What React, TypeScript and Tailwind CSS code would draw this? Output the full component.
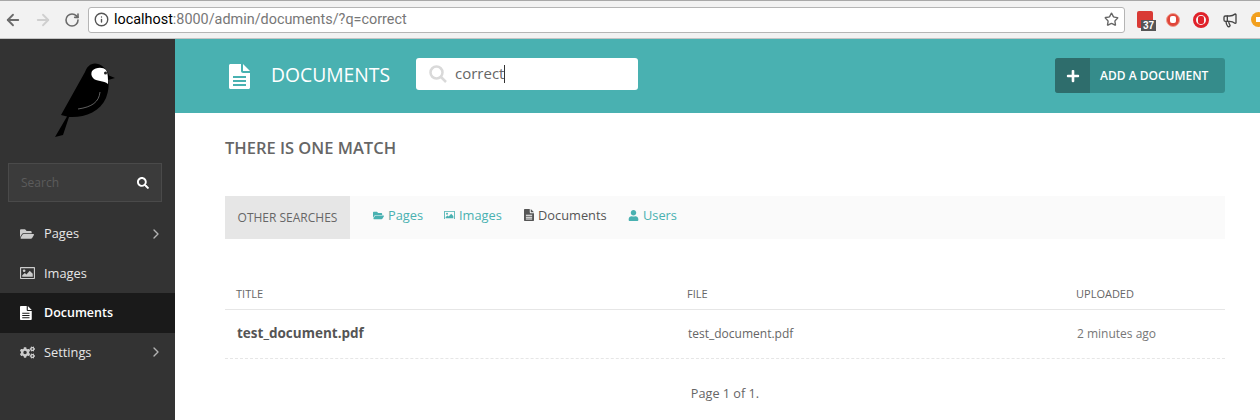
import { FaFolderOpen, FaCogs, FaUser, FaSearch, FaPlus } from 'react-icons/fa';
import { ArrowLeft, ArrowRight, RotateCw, ChevronRight, Star, Info, Megaphone } from 'lucide-react';

type IconProps = { size?: number; className?: string };

// FA4 style file-text, the corner is cut out
function DocIcon({ size = 12, className }: IconProps) {
    return (
        <svg width={size * 0.84} height={size} viewBox="0 0 21 25" className={className}>
            <path fillRule="evenodd" fill="currentColor" d="M1.500 0 H12 V7 C12 8 13 9 14 9 H21 V23.500 C21 24.300 20.300 25 19.500 25 H1.500 C0.700 25 0 24.300 0 23.500 V1.500 C0 0.700 0.700 0 1.500 0 Z M4 12 V14 H17 V12 Z M4 16 V18 H17 V16 Z M4 20 V22 H17 V20 Z" />
            <path fill="currentColor" d="M14 0 L21 7 H14 Z" />
        </svg>
    );
}

// FA4 style picture-o, outlined frame
function PictureIcon({ size = 12, className }: IconProps) {
    return (
        <svg width={size} height={size * 0.8} viewBox="0 0 20 16" className={className}>
            <path fillRule="evenodd" fill="currentColor" d="M1 0 H19 C19.600 0 20 0.400 20 1 V15 C20 15.600 19.600 16 19 16 H1 C0.400 16 0 15.600 0 15 V1 C0 0.400 0.400 0 1 0 Z M1.500 1.500 V14.500 H18.500 V1.500 Z" />
            <circle cx="5.500" cy="5" r="1.800" fill="currentColor" />
            <path fill="currentColor" d="M3 13 V11 L6.500 8 L8.500 10 L13 5 L17 9 V13 Z" />
        </svg>
    );
}

const menu = [
    { label: 'Pages', icon: FaFolderOpen, size: 14, arrow: true },
    { label: 'Images', icon: PictureIcon, size: 15 },
    { label: 'Documents', icon: DocIcon, size: 14, active: true },
    { label: 'Settings', icon: FaCogs, size: 15, arrow: true },
];

const searches = [
    { label: 'Pages', icon: FaFolderOpen, size: 11, w: 'w-[71px]' },
    { label: 'Images', icon: PictureIcon, size: 11, w: 'w-[80px]' },
    { label: 'Documents', icon: DocIcon, size: 12, w: 'w-[104px]', current: true },
    { label: 'Users', icon: FaUser, size: 11, w: 'w-[60px]' },
];

function Bird() {
    return (
        <svg width="70" height="80" viewBox="50 60 70 80">
            <path d="M115 78 L109 75.500 C107 68 100 63.500 95 63.500 C90 63.500 87 67 85 72 L61 115 L67 116.500 L55 137 L63 135 L69 117 C84 118 100 112 106 98 C109 90 109 84 108 80 Z" fill="#000" />
            <path d="M92 71 C96 67 103 67 106 70 C108 73 108 78 108 84 C104 80 96 82 93 78 C91 76 91 73 92 71 Z" fill="#fff" />
            <circle cx="105.500" cy="73" r="1.500" fill="#222" />
            <path d="M100 92 C99 102 92 107 78 109" fill="none" stroke="#888" strokeWidth="0.7" />
        </svg>
    );
}

function BrowserBar() {
    return (
        <div className="h-[39px] flex items-center bg-[#f2f2f2] border-t border-t-[#a8a8a8] border-b border-b-[#c4c4c4] shrink-0">
            <div className="flex items-center gap-[12px] pl-[4px] w-[88px] shrink-0">
                <ArrowLeft size={18} strokeWidth={2.4} className="text-[#6b6b6b]" />
                <ArrowRight size={18} strokeWidth={2.4} className="text-[#cfcfcf]" />
                <RotateCw size={16} strokeWidth={2.4} className="text-[#6b6b6b]" />
            </div>
            <div className="w-[1037px] h-[26px] bg-white border border-[#b5b5b5] rounded-[3px] flex items-center pl-[5px] pr-[6px] shrink-0">
                <Info size={15} strokeWidth={2.2} className="text-[#555] shrink-0" />
                <div className="ml-[5px] text-[14.400px] text-[#777] font-['Roboto',sans-serif] flex-1">
                    <span className="text-black">localhost</span>:8000/admin/documents/?q=correct
                </div>
                <Star size={15} strokeWidth={2.2} className="text-[#666] mr-[-1px]" />
            </div>
            <div className="flex items-center ml-[12px] gap-[13px]">
                <div className="relative w-[16px] h-[17px] bg-[#d93a35] rounded-[2px]">
                    <div className="absolute left-[4px] top-[9px] bg-[#555] text-white text-[10px] leading-[11px] font-bold px-[2px] font-['Liberation_Sans',sans-serif]">37</div>
                </div>
                <div className="w-[14px] h-[14px] rounded-full bg-[#e0463a] border border-[#f0a090] flex items-center justify-center">
                    <div className="w-[6px] h-[7px] bg-white rounded-[2px]" />
                </div>
                <div className="w-[16px] h-[16px] rounded-full border-[3px] border-[#e0222a] bg-[#f5f5f5] flex items-center justify-center">
                    <div className="w-[6px] h-[8px] bg-[#e0222a] rounded-[2px]" />
                </div>
                <Megaphone size={16} className="text-[#444] shrink-0" />
                <div className="w-[15px] h-[15px] rounded-full bg-[#f2a01e] flex items-center justify-center shrink-0">
                    <div className="w-[5px] h-[5px] bg-white" />
                </div>
            </div>
        </div>
    );
}

function Sidebar() {
    return (
        <aside className="w-[175px] shrink-0 bg-[#333333] flex flex-col">
            <div className="h-[124px] flex justify-center pt-[21px] pr-[5px]">
                <Bird />
            </div>
            <div className="ml-[8px] mr-[13px] h-[39px] border border-[#4a4a4a] bg-[#3b3b3b] flex items-center justify-between pl-[12px] pr-[12px]">
                <span className="text-[12px] text-[#5c5c5c]">Search</span>
                <FaSearch size={12} className="text-white" />
            </div>
            <nav className="mt-[12px]">
                {menu.map((m) => (
                    <div key={m.label} className={`h-[39.500px] flex items-center pl-[20px] pr-[11px] ${m.active ? 'bg-[#1a1a1a] text-white font-semibold text-[12.500px] pt-px' : 'text-[#e6e6e6] text-[12.800px]'}`}>
                        <span className="w-[24px] flex shrink-0">
                            <m.icon size={m.size} className={m.active ? 'text-white' : 'text-[#cccccc]'} />
                        </span>
                        <span className="flex-1">{m.label}</span>
                        {m.arrow && <ChevronRight size={16} className="text-[#b3b3b3]" />}
                    </div>
                ))}
            </nav>
        </aside>
    );
}

function Header() {
    return (
        <header className="h-[74px] bg-[#49b1b1] flex items-center pl-[54px] pr-[35px] shrink-0">
            <DocIcon size={25} className="text-white shrink-0" />
            <h1 className="ml-[21px] mt-[-3px] w-[145px] text-[19.300px] text-white font-normal leading-none">DOCUMENTS</h1>
            <div className="h-[32px] w-[222px] mt-[-5px] bg-white rounded-[3px] flex items-center pl-[12px]">
                <svg width="20" height="20" viewBox="0 0 20 20" fill="none" stroke="#d9d9d9" strokeWidth="2.500">
                    <circle cx="8.500" cy="8.500" r="6" />
                    <path d="M13 13 L18 18" />
                </svg>
                <span className="ml-[7px] text-[15px] text-[#666] leading-none">correct</span>
                <span className="w-px h-[18px] bg-[#333]" />
            </div>
            <button className="ml-auto h-[35px] w-[170px] mt-[-1px] rounded-[3px] bg-[#358c8b] flex items-stretch overflow-hidden text-white">
                <span className="w-[35px] bg-[#2e6d6c] flex items-center justify-center shrink-0">
                    <FaPlus size={14} />
                </span>
                <span className="flex-1 flex items-center pl-[10px] text-[12px] font-semibold">ADD A DOCUMENT</span>
            </button>
        </header>
    );
}

export default function App() {
    return (
        <div className="w-[1260px] h-[420px] overflow-hidden flex flex-col bg-white font-['Open_Sans',sans-serif]">
            <BrowserBar />
            <div className="flex flex-1 min-h-0">
                <Sidebar />
                <main className="flex-1 min-w-0 flex flex-col">
                    <Header />
                    <div className="pl-[50px] pr-[35px]">
                        <h2 className="mt-[25px] text-[16.500px] leading-[20px] font-semibold text-[#666]">THERE IS ONE MATCH</h2>
                        <div className="mt-[38px] h-[43px] bg-[#fafafa] flex items-stretch">
                            <div className="w-[125px] bg-[#e6e6e6] text-[12px] text-[#666] flex items-center justify-center pt-[1px]">OTHER SEARCHES</div>
                            <ul className="flex items-start pl-[23px] pt-[10px]">
                                {searches.map((s) => (
                                    <li key={s.label} className={`${s.w} flex items-center gap-[4px] text-[12.800px] leading-[18px] ${s.current ? 'text-[#555]' : 'text-[#49b1b1]'}`}>
                                        <s.icon size={s.size} className="shrink-0" />
                                        <span>{s.label}</span>
                                    </li>
                                ))}
                            </ul>
                        </div>
                        <div className="mt-[46px] h-[25px] grid grid-cols-[451px_389px_1fr] items-start border-b border-[#e6e6e6] pl-[11px] pt-[1px] text-[11px] leading-[16px] text-[#666]">
                            <span>TITLE</span>
                            <span>FILE</span>
                            <span>UPLOADED</span>
                        </div>
                        <div className="h-[49px] grid grid-cols-[451px_389px_1fr] items-center border-b border-dashed border-[#e6e6e6] pl-[12px] text-[#666]">
                            <span className="text-[13.500px] font-bold text-[#555] pb-[1px]">test_document.pdf</span>
                            <span className="text-[12px]">test_document.pdf</span>
                            <span className="text-[12px] text-[#777]">2 minutes ago</span>
                        </div>
                        <p className="mt-[25px] text-center text-[12.700px] leading-[18px] text-[#666]">Page 1 of 1.</p>
                    </div>
                </main>
            </div>
        </div>
    );
}
